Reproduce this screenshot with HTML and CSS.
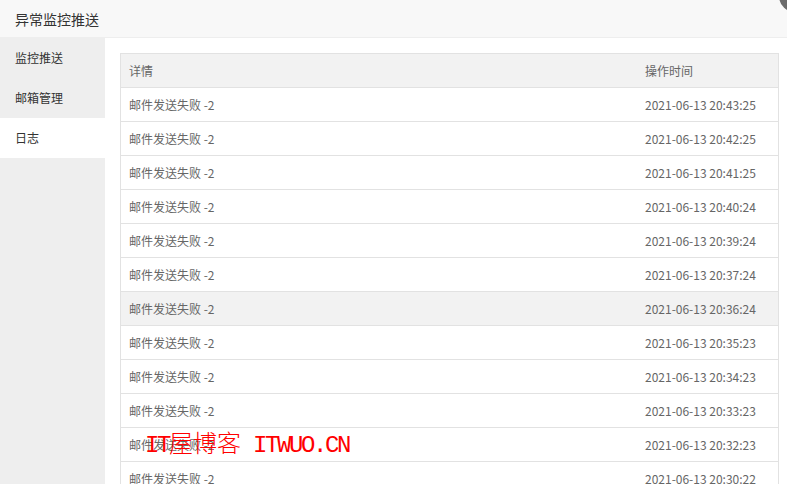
FILE: index.html
```html
<!DOCTYPE html>
<html lang="zh-CN">
<head>
    <meta charset="UTF-8">
    <title>异常监控推送</title>
    <link rel="stylesheet" href="styles.css">
</head>
<body>
    <div class="header">
        <span class="title">异常监控推送</span>
        <span class="close-btn"></span>
    </div>
    <div class="layout">
        <ul class="side">
            <li>监控推送</li>
            <li>邮箱管理</li>
            <li class="active">日志</li>
        </ul>
        <div class="main">
            <table class="log-table">
                <thead>
                    <tr><th class="col-detail">详情</th><th>操作时间</th></tr>
                </thead>
                <tbody>
                    <tr><td>邮件发送失败 -2</td><td>2021-06-13 20:43:25</td></tr>
                    <tr><td>邮件发送失败 -2</td><td>2021-06-13 20:42:25</td></tr>
                    <tr><td>邮件发送失败 -2</td><td>2021-06-13 20:41:25</td></tr>
                    <tr><td>邮件发送失败 -2</td><td>2021-06-13 20:40:24</td></tr>
                    <tr><td>邮件发送失败 -2</td><td>2021-06-13 20:39:24</td></tr>
                    <tr><td>邮件发送失败 -2</td><td>2021-06-13 20:37:24</td></tr>
                    <tr class="hover"><td>邮件发送失败 -2</td><td>2021-06-13 20:36:24</td></tr>
                    <tr><td>邮件发送失败 -2</td><td>2021-06-13 20:35:23</td></tr>
                    <tr><td>邮件发送失败 -2</td><td>2021-06-13 20:34:23</td></tr>
                    <tr><td>邮件发送失败 -2</td><td>2021-06-13 20:33:23</td></tr>
                    <tr><td>邮件发送失败 -2</td><td>2021-06-13 20:32:23</td></tr>
                    <tr><td>邮件发送失败 -2</td><td>2021-06-13 20:30:22</td></tr>
                </tbody>
            </table>
        </div>
    </div>

    <!-- watermark -->
    <div class="watermark"><span class="wm-latin">IT</span>屋博客<span class="wm-latin"> ITWUO.CN</span></div>
</body>
</html>
```

FILE: styles.css
```css
html, body {
    margin: 0;
    height: 100%;
    overflow: hidden;
}
body {
    font-family: "Noto Sans CJK SC", "Noto Sans", sans-serif;
    background: #fff;
    color: #666;
    position: relative;
}
.header {
    height: 37px;
    line-height: 37px;
    background: #f8f8f8;
    border-bottom: 1px solid #eee;
    padding-left: 15px;
    position: relative;
    overflow: hidden;
}
.title {
    font-size: 14px;
    color: #333;
}
.close-btn {
    position: absolute;
    right: -24px;
    top: -20px;
    width: 32px;
    height: 32px;
    border-radius: 50%;
    background: #6b6b6b;
}
.layout {
    display: flex;
    height: calc(100% - 38px);
}
.side {
    width: 105px;
    margin: 0;
    padding: 0;
    list-style: none;
    background: #eee;
}
.side li {
    height: 40px;
    line-height: 40px;
    padding-left: 15px;
    font-size: 12px;
    color: #333;
}
.side li.active {
    background: #fff;
}
.main {
    flex: 1;
    padding: 15px 8px 0 15px;
}
.log-table {
    width: 100%;
    border-collapse: collapse;
    font-size: 12px;
    color: #666;
}
.log-table th,
.log-table td {
    height: 33px;
    padding: 0 8px;
    text-align: left;
    font-weight: normal;
    border-top: 1px solid #e2e2e2;
    border-bottom: 1px solid #e2e2e2;
}
.log-table tr > :first-child { border-left: 1px solid #e2e2e2; }
.log-table tr > :last-child { border-right: 1px solid #e2e2e2; }
.log-table thead tr {
    background: #f2f2f2;
}
.col-detail {
    width: 500px;
}
.log-table tr.hover {
    background: #f2f2f2;
}
.watermark {
    position: absolute;
    left: 145px;
    top: 427px;
    font-family: "Noto Sans CJK SC", sans-serif;
    font-weight: 300;
    font-size: 24px;
    line-height: 30px;
    color: #f00;
    white-space: pre;
}
.wm-latin {
    font-family: "Liberation Mono", monospace;
    font-weight: normal;
    letter-spacing: -2.4px;
}
```
